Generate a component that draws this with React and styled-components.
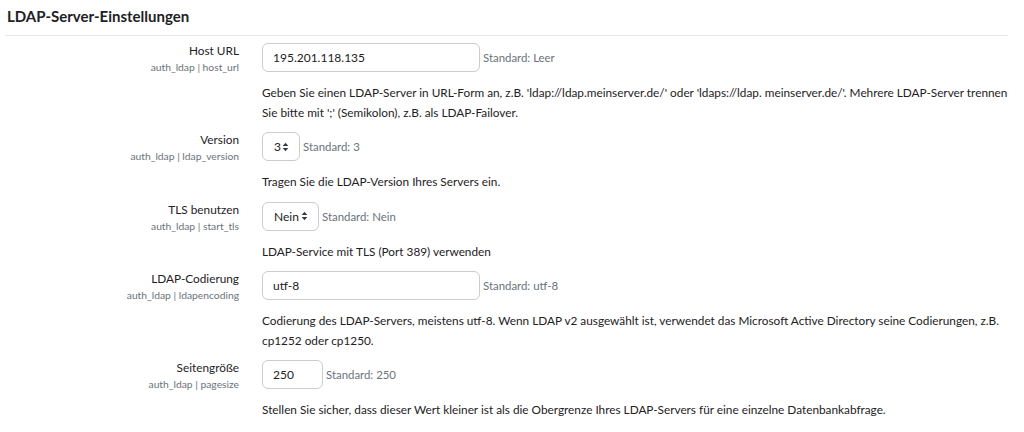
import React from 'react'
import styled, { createGlobalStyle } from 'styled-components'

const FONT = `Lato, "Open Sans", sans-serif`

const GlobalStyle = createGlobalStyle`
  body {
    margin: 0;
    background: #fff;
    font-family: ${FONT};
    color: #1d2125;
  }
`

const Page = styled.div`
  width: 1024px;
  height: 432px;
  overflow: hidden;
  padding: 0 16px 0 5px;
  box-sizing: border-box;
`

const Heading = styled.h3`
  margin: 0;
  padding: 6px 0 0 2px;
  height: 29px;
  font-size: 15px;
  font-weight: 700;
  line-height: 21px;
  border-bottom: 1px solid #e6e6e6;
`

const Settings = styled.div`
  padding-top: 7px;
`

const Row = styled.div`
  display: grid;
  grid-template-columns: 234px 1fr;
  column-gap: 23px;
  margin-bottom: 10px;
`

const LabelCol = styled.div`
  text-align: right;
`

const Label = styled.div`
  font-size: 11.8px;
  line-height: 16px;
`

const Key = styled.div`
  font-size: 10.3px;
  line-height: 12px;
  margin-top: 2px;
  color: #6a737b;
`

const Field = styled.div`
  display: flex;
  align-items: center;
  gap: 3px;
`

const Input = styled.div`
  box-sizing: border-box;
  width: ${(p) => p.$width}px;
  height: 29px;
  padding: 0 10px;
  display: flex;
  align-items: center;
  border: 1px solid #c9ccd0;
  border-radius: 6px;
  font-size: 12px;
  background: #fff;
`

const Select = styled(Input)`
  justify-content: space-between;
  padding: 0 10px 0 11px;
`

const Default = styled.span`
  font-size: 11.4px;
  color: #6a737b;
`

const Description = styled.div`
  margin-top: 11px;
  font-size: 11.8px;
  line-height: 19.5px;
  max-width: 758px;
`

const Arrows = () => (
  <svg width="7" height="10" viewBox="0 0 7 10">
    <path d="M3.5 0.8 L6.3 4 H0.7 Z" fill="#343a40" />
    <path d="M3.5 9.2 L6.3 6 H0.7 Z" fill="#343a40" />
  </svg>
)

const settings = [
  {
    label: 'Host URL',
    key: 'auth_ldap | host_url',
    type: 'text',
    value: '195.201.118.135',
    width: 218,
    def: 'Leer',
    desc: "Geben Sie einen LDAP-Server in URL-Form an, z.B. 'ldap://ldap.meinserver.de/' oder 'ldaps://ldap. meinserver.de/'. Mehrere LDAP-Server trennen Sie bitte mit ';' (Semikolon), z.B. als LDAP-Failover.",
  },
  {
    label: 'Version',
    key: 'auth_ldap | ldap_version',
    type: 'select',
    value: '3',
    width: 38,
    def: '3',
    desc: 'Tragen Sie die LDAP-Version Ihres Servers ein.',
  },
  {
    label: 'TLS benutzen',
    key: 'auth_ldap | start_tls',
    type: 'select',
    value: 'Nein',
    width: 57,
    def: 'Nein',
    desc: 'LDAP-Service mit TLS (Port 389) verwenden',
  },
  {
    label: 'LDAP-Codierung',
    key: 'auth_ldap | ldapencoding',
    type: 'text',
    value: 'utf-8',
    width: 218,
    def: 'utf-8',
    desc: 'Codierung des LDAP-Servers, meistens utf-8. Wenn LDAP v2 ausgewählt ist, verwendet das Microsoft Active Directory seine Codierungen, z.B. cp1252 oder cp1250.',
  },
  {
    label: 'Seitengröße',
    key: 'auth_ldap | pagesize',
    type: 'text',
    value: '250',
    width: 61,
    def: '250',
    desc: 'Stellen Sie sicher, dass dieser Wert kleiner ist als die Obergrenze Ihres LDAP-Servers für eine einzelne Datenbankabfrage.',
  },
]

const App = () => {
  return (
    <>
      <GlobalStyle />
      <Page>
        <Heading>LDAP-Server-Einstellungen</Heading>
        <Settings>
          {settings.map((s) => (
            <Row key={s.key}>
              <LabelCol>
                <Label>{s.label}</Label>
                <Key>{s.key}</Key>
              </LabelCol>
              <div>
                <Field>
                  {s.type === 'select' ? (
                    <Select $width={s.width}>
                      <span>{s.value}</span>
                      <Arrows />
                    </Select>
                  ) : (
                    <Input $width={s.width}>{s.value}</Input>
                  )}
                  <Default>Standard: {s.def}</Default>
                </Field>
                <Description>{s.desc}</Description>
              </div>
            </Row>
          ))}
        </Settings>
      </Page>
    </>
  )
}

export default App
